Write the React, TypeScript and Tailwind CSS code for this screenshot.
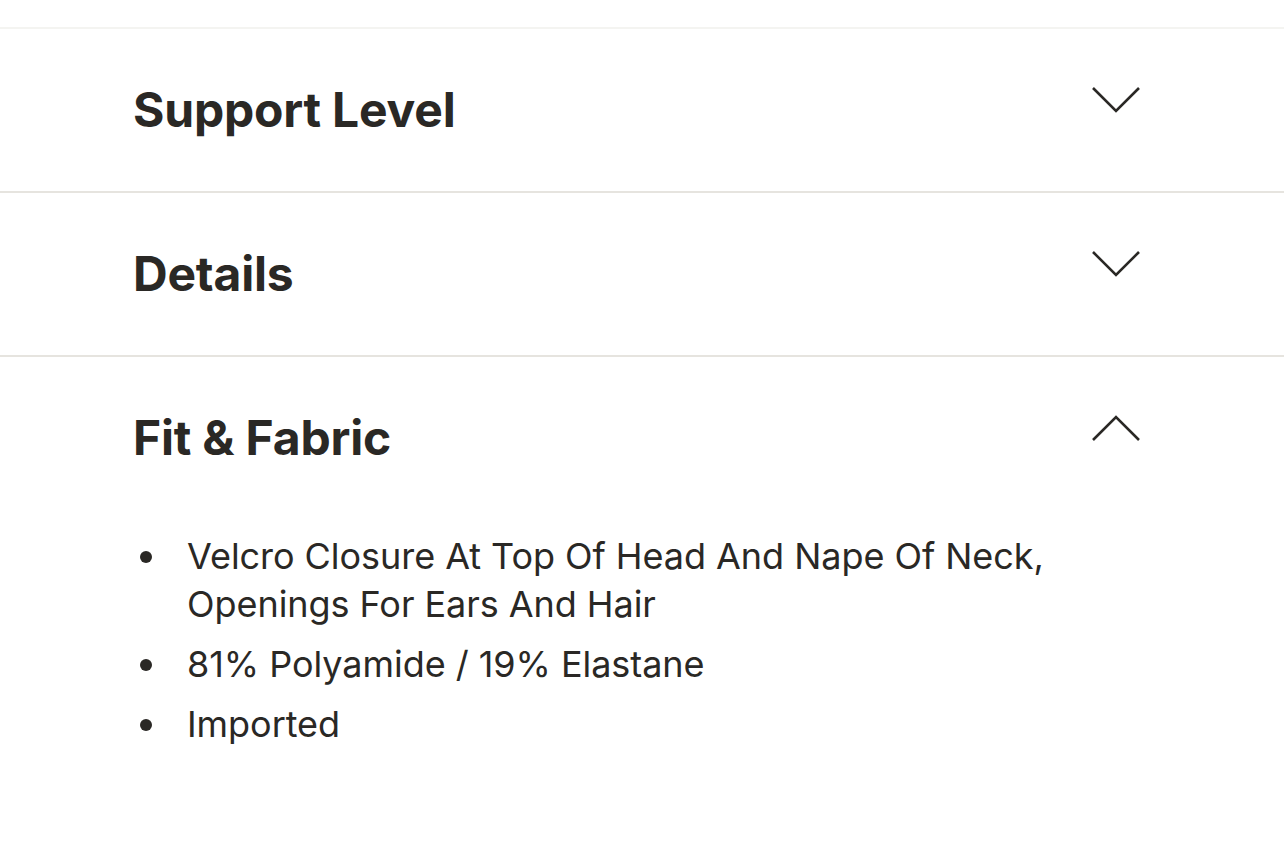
const SECTIONS = [
  { title: 'Support Level', open: false, items: [] as string[] },
  { title: 'Details', open: false, items: [] as string[] },
  {
    title: 'Fit & Fabric',
    open: true,
    items: [
      'Velcro Closure At Top Of Head And Nape Of Neck, Openings For Ears And Hair',
      '81% Polyamide / 19% Elastane',
      'Imported',
    ],
  },
]

function Chevron({ up }: { up: boolean }) {
  return (
    <svg width="50" height="28" viewBox="0 0 50 28" fill="none" className="shrink-0 mt-[4px]">
      <path
        d={up ? 'M2 26 L25 3 L48 26' : 'M2 2 L25 25 L48 2'}
        stroke="#2a2825"
        strokeWidth="2.6"
      />
    </svg>
  )
}

export default function App() {
  return (
    <div className="min-h-[848px] bg-white pt-[27px] text-[#2a2825]" style={{ fontFamily: 'Inter, "Noto Sans", sans-serif' }}>
      <div className="border-t-2 border-[#f4f4f1]">
        {SECTIONS.map(({ title, open, items }) => (
          <div key={title} className={open ? '' : 'border-b-2 border-[#e6e4df]'}>
            <div className="flex items-start justify-between pl-[133px] pr-[143px] py-[53px]">
              <h2 className="text-[48px] leading-[56px] font-bold tracking-[-0.2px]">{title}</h2>
              <Chevron up={open} />
            </div>
            {open && (
              <ul className="pl-[140px] pr-[200px] mt-[13px] flex flex-col gap-[12px]">
                {items.map((item) => (
                  <li key={item} className="flex items-start text-[36px] leading-[48px] tracking-[-0.05px]">
                    <span className="w-[12px] h-[12px] rounded-full bg-[#2a2825] mt-[19px] mr-[35px] shrink-0" />
                    <span className="max-w-[900px]">{item}</span>
                  </li>
                ))}
              </ul>
            )}
          </div>
        ))}
      </div>
    </div>
  )
}
